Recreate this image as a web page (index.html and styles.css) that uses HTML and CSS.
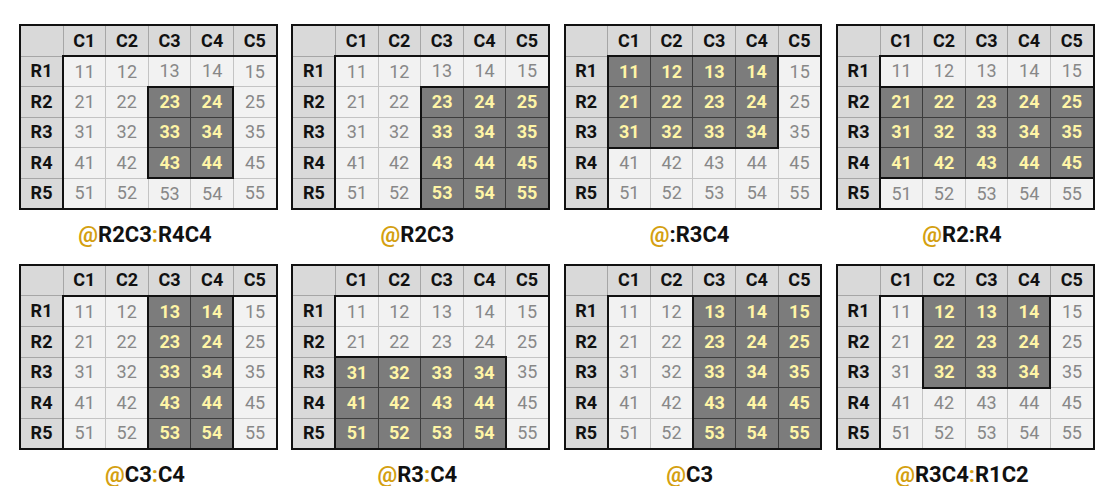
FILE: index.html
```html
<!DOCTYPE html>
<html lang="en">
<head>
<meta charset="utf-8">
<title>Range references</title>
<link rel="stylesheet" href="styles.css">
</head>
<body>
<main class="board">

<figure class="panel">
<table class="grid">
<tr class="head"><th class="corner"></th><th>C1</th><th>C2</th><th>C3</th><th>C4</th><th>C5</th></tr>
<tr class="first"><th>R1</th><td>11</td><td>12</td><td>13</td><td>14</td><td>15</td></tr>
<tr><th>R2</th><td>21</td><td>22</td><td class="s t l">23</td><td class="s t r">24</td><td>25</td></tr>
<tr><th>R3</th><td>31</td><td>32</td><td class="s l">33</td><td class="s r">34</td><td>35</td></tr>
<tr><th>R4</th><td>41</td><td>42</td><td class="s b l">43</td><td class="s b r">44</td><td>45</td></tr>
<tr><th>R5</th><td>51</td><td>52</td><td>53</td><td>54</td><td>55</td></tr>
</table>
<figcaption class="label"><span class="at">@</span>R2C3<span class="at">:</span>R4C4</figcaption>
</figure>

<figure class="panel">
<table class="grid">
<tr class="head"><th class="corner"></th><th>C1</th><th>C2</th><th>C3</th><th>C4</th><th>C5</th></tr>
<tr class="first"><th>R1</th><td>11</td><td>12</td><td>13</td><td>14</td><td>15</td></tr>
<tr><th>R2</th><td>21</td><td>22</td><td class="s t l">23</td><td class="s t">24</td><td class="s t r">25</td></tr>
<tr><th>R3</th><td>31</td><td>32</td><td class="s l">33</td><td class="s">34</td><td class="s r">35</td></tr>
<tr><th>R4</th><td>41</td><td>42</td><td class="s l">43</td><td class="s">44</td><td class="s r">45</td></tr>
<tr><th>R5</th><td>51</td><td>52</td><td class="s b l">53</td><td class="s b">54</td><td class="s b r">55</td></tr>
</table>
<figcaption class="label"><span class="at">@</span>R2C3</figcaption>
</figure>

<figure class="panel">
<table class="grid">
<tr class="head"><th class="corner"></th><th>C1</th><th>C2</th><th>C3</th><th>C4</th><th>C5</th></tr>
<tr class="first"><th>R1</th><td class="s t l">11</td><td class="s t">12</td><td class="s t">13</td><td class="s t r">14</td><td>15</td></tr>
<tr><th>R2</th><td class="s l">21</td><td class="s">22</td><td class="s">23</td><td class="s r">24</td><td>25</td></tr>
<tr><th>R3</th><td class="s b l">31</td><td class="s b">32</td><td class="s b">33</td><td class="s b r">34</td><td>35</td></tr>
<tr><th>R4</th><td>41</td><td>42</td><td>43</td><td>44</td><td>45</td></tr>
<tr><th>R5</th><td>51</td><td>52</td><td>53</td><td>54</td><td>55</td></tr>
</table>
<figcaption class="label"><span class="at">@</span>:R3C4</figcaption>
</figure>

<figure class="panel">
<table class="grid">
<tr class="head"><th class="corner"></th><th>C1</th><th>C2</th><th>C3</th><th>C4</th><th>C5</th></tr>
<tr class="first"><th>R1</th><td>11</td><td>12</td><td>13</td><td>14</td><td>15</td></tr>
<tr><th>R2</th><td class="s t l">21</td><td class="s t">22</td><td class="s t">23</td><td class="s t">24</td><td class="s t r">25</td></tr>
<tr><th>R3</th><td class="s l">31</td><td class="s">32</td><td class="s">33</td><td class="s">34</td><td class="s r">35</td></tr>
<tr><th>R4</th><td class="s b l">41</td><td class="s b">42</td><td class="s b">43</td><td class="s b">44</td><td class="s b r">45</td></tr>
<tr><th>R5</th><td>51</td><td>52</td><td>53</td><td>54</td><td>55</td></tr>
</table>
<figcaption class="label"><span class="at">@</span>R2:R4</figcaption>
</figure>

<figure class="panel">
<table class="grid">
<tr class="head"><th class="corner"></th><th>C1</th><th>C2</th><th>C3</th><th>C4</th><th>C5</th></tr>
<tr class="first"><th>R1</th><td>11</td><td>12</td><td class="s t l">13</td><td class="s t r">14</td><td>15</td></tr>
<tr><th>R2</th><td>21</td><td>22</td><td class="s l">23</td><td class="s r">24</td><td>25</td></tr>
<tr><th>R3</th><td>31</td><td>32</td><td class="s l">33</td><td class="s r">34</td><td>35</td></tr>
<tr><th>R4</th><td>41</td><td>42</td><td class="s l">43</td><td class="s r">44</td><td>45</td></tr>
<tr><th>R5</th><td>51</td><td>52</td><td class="s b l">53</td><td class="s b r">54</td><td>55</td></tr>
</table>
<figcaption class="label"><span class="at">@</span>C3<span class="at">:</span>C4</figcaption>
</figure>

<figure class="panel">
<table class="grid">
<tr class="head"><th class="corner"></th><th>C1</th><th>C2</th><th>C3</th><th>C4</th><th>C5</th></tr>
<tr class="first"><th>R1</th><td>11</td><td>12</td><td>13</td><td>14</td><td>15</td></tr>
<tr><th>R2</th><td>21</td><td>22</td><td>23</td><td>24</td><td>25</td></tr>
<tr><th>R3</th><td class="s t l">31</td><td class="s t">32</td><td class="s t">33</td><td class="s t r">34</td><td>35</td></tr>
<tr><th>R4</th><td class="s l">41</td><td class="s">42</td><td class="s">43</td><td class="s r">44</td><td>45</td></tr>
<tr><th>R5</th><td class="s b l">51</td><td class="s b">52</td><td class="s b">53</td><td class="s b r">54</td><td>55</td></tr>
</table>
<figcaption class="label"><span class="at">@</span>R3<span class="at">:</span>C4</figcaption>
</figure>

<figure class="panel">
<table class="grid">
<tr class="head"><th class="corner"></th><th>C1</th><th>C2</th><th>C3</th><th>C4</th><th>C5</th></tr>
<tr class="first"><th>R1</th><td>11</td><td>12</td><td class="s t l">13</td><td class="s t">14</td><td class="s t r">15</td></tr>
<tr><th>R2</th><td>21</td><td>22</td><td class="s l">23</td><td class="s">24</td><td class="s r">25</td></tr>
<tr><th>R3</th><td>31</td><td>32</td><td class="s l">33</td><td class="s">34</td><td class="s r">35</td></tr>
<tr><th>R4</th><td>41</td><td>42</td><td class="s l">43</td><td class="s">44</td><td class="s r">45</td></tr>
<tr><th>R5</th><td>51</td><td>52</td><td class="s b l">53</td><td class="s b">54</td><td class="s b r">55</td></tr>
</table>
<figcaption class="label"><span class="at">@</span>C3</figcaption>
</figure>

<figure class="panel">
<table class="grid">
<tr class="head"><th class="corner"></th><th>C1</th><th>C2</th><th>C3</th><th>C4</th><th>C5</th></tr>
<tr class="first"><th>R1</th><td>11</td><td class="s t l">12</td><td class="s t">13</td><td class="s t r">14</td><td>15</td></tr>
<tr><th>R2</th><td>21</td><td class="s l">22</td><td class="s">23</td><td class="s r">24</td><td>25</td></tr>
<tr><th>R3</th><td>31</td><td class="s b l">32</td><td class="s b">33</td><td class="s b r">34</td><td>35</td></tr>
<tr><th>R4</th><td>41</td><td>42</td><td>43</td><td>44</td><td>45</td></tr>
<tr><th>R5</th><td>51</td><td>52</td><td>53</td><td>54</td><td>55</td></tr>
</table>
<figcaption class="label"><span class="at">@</span>R3C4<span class="at">:</span>R1C2</figcaption>
</figure>

</main>
</body>
</html>
```

FILE: styles.css
```css
html, body {
  margin: 0;
  padding: 0;
  background: #ffffff;
}

body {
  font-family: Roboto, "Liberation Sans", Arial, sans-serif;
  color: #111111;
}

.board {
  display: grid;
  grid-template-columns: repeat(4, 252px);
  column-gap: 20.33px;
  padding: 24px 0 0 19px;
}

.panel {
  margin: 0;
  display: flex;
  flex-direction: column;
}

.grid {
  border-collapse: collapse;
  table-layout: fixed;
  width: 252px;
  border: 2px solid #111111;
  font-size: 18px;
}

.grid th,
.grid td {
  width: 41.6px;
  padding: 0;
  text-align: center;
  vertical-align: middle;
  line-height: 1;
}

.grid th {
  background: #d9d9d9;
  color: #111111;
  font-weight: 700;
  border: 1px solid #a6a6a6;
}

.grid .head {
  height: 31px;
}

.grid tr {
  height: 30.6px;
}

.grid td {
  background: #f2f2f2;
  color: #888888;
  font-weight: 400;
  border: 1px solid #c4c4c4;
}

.grid .first td {
  border-top: 2px solid #111111;
}

.grid td:first-of-type {
  border-left: 2px solid #111111;
}

.grid td.s {
  background: #7c7c7c;
  color: #fff5a6;
  font-weight: 700;
  border-color: #3c3c3c;
}

.grid td.t { border-top: 2px solid #111111; }
.grid td.b { border-bottom: 2px solid #111111; }
.grid td.l { border-left: 2px solid #111111; }
.grid td.r { border-right: 2px solid #111111; }

.label {
  height: 54px;
  line-height: 50px;
  text-align: center;
  font-size: 22px;
  font-weight: 700;
  color: #111111;
}

.at {
  color: #d4a011;
}
```
